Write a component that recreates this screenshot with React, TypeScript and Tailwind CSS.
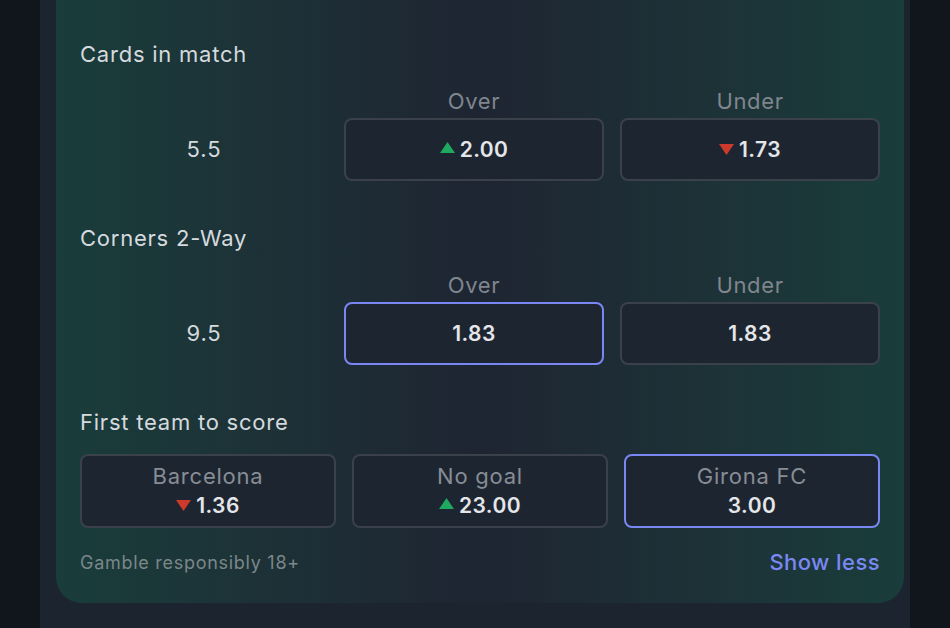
import clsx from "clsx";

type Move = "up" | "down" | undefined;

function Arrow(props: { move: Move }) {
  if (!props.move) return null;
  return (
    <svg
      width="15"
      height="11"
      viewBox="0 0 15 11"
      className={clsx(
        "mr-[5px]",
        props.move === "up" ? "-mt-[5px]" : "-mt-[1px]"
      )}
    >
      {props.move === "up" ? (
        <polygon points="7.5,0 15,11 0,11" fill="#1fa860" />
      ) : (
        <polygon points="0,0 15,0 7.5,11" fill="#cc3a2b" />
      )}
    </svg>
  );
}

function OddsButton(props: {
  odds: string;
  move?: Move;
  selected?: boolean;
  label?: string;
}) {
  return (
    <button
      className={clsx(
        props.selected ? "border-[#7a86f2]" : "border-[#3a414b]",
        "flex flex-col items-center justify-center w-full rounded-lg border-2 bg-[#1d2531]",
        props.label ? "h-[74px]" : "h-[63px]"
      )}
    >
      {props.label && (
        <span className="text-[22px] leading-[29px] tracking-[0.035em] text-[#878d95]">
          {props.label}
        </span>
      )}
      <span className="flex items-center text-[21px] leading-[29px] tracking-[0.02em] font-semibold text-[#e4e6e9]">
        <Arrow move={props.move} />
        {props.odds}
      </span>
    </button>
  );
}

function OverUnder(props: {
  title: string;
  line: string;
  over: { odds: string; move?: Move; selected?: boolean };
  under: { odds: string; move?: Move; selected?: boolean };
}) {
  return (
    <div className="flex flex-col">
      <h3 className="text-[22px] leading-[28px] tracking-[0.035em] text-[#d5dadf]">
        {props.title}
      </h3>
      <div className="grid grid-cols-[248px_1fr_1fr] gap-x-4 mt-[19px]">
        <div />
        <div className="text-center text-[22px] leading-[28px] tracking-[0.03em] text-[#7f868e]">
          Over
        </div>
        <div className="text-center text-[22px] leading-[28px] tracking-[0.03em] text-[#7f868e]">
          Under
        </div>
        <div className="flex items-center justify-center text-[22px] tracking-[0.04em] text-[#d5dadf] mt-[3px]">
          {props.line}
        </div>
        <div className="mt-[3px]">
          <OddsButton {...props.over} />
        </div>
        <div className="mt-[3px]">
          <OddsButton {...props.under} />
        </div>
      </div>
    </div>
  );
}

export default function App() {
  return (
    <div
      className="w-[950px] h-[628px] overflow-hidden bg-[#11161c] px-10"
      style={{ fontFamily: "Inter, 'Noto Sans', sans-serif" }}
    >
      <div className="h-full bg-[#1c2430] pl-4 pr-[6px]">
        <div className="flex flex-col rounded-b-[26px] bg-linear-to-r from-[#193d3b] via-[#1e2532] to-[#193d3b] px-6 pt-10 pb-[27px]">
          <OverUnder
            title="Cards in match"
            line="5.5"
            over={{ odds: "2.00", move: "up" }}
            under={{ odds: "1.73", move: "down" }}
          />
          <div className="mt-[43px]">
            <OverUnder
              title="Corners 2-Way"
              line="9.5"
              over={{ odds: "1.83", selected: true }}
              under={{ odds: "1.83" }}
            />
          </div>
          <h3 className="mt-[43px] text-[22px] leading-[28px] tracking-[0.035em] text-[#d5dadf]">
            First team to score
          </h3>
          <div className="grid grid-cols-3 gap-4 mt-[18px]">
            <OddsButton label="Barcelona" odds="1.36" move="down" />
            <OddsButton label="No goal" odds="23.00" move="up" />
            <OddsButton label="Girona FC" odds="3.00" selected />
          </div>
          <div className="flex items-center justify-between mt-[20px] h-[28px]">
            <span className="text-[18px] tracking-[0.04em] text-[#7b8789]">
              Gamble responsibly 18+
            </span>
            <button className="text-[22px] font-medium tracking-[0.02em] text-[#7b87f3]">
              Show less
            </button>
          </div>
        </div>
      </div>
    </div>
  );
}
